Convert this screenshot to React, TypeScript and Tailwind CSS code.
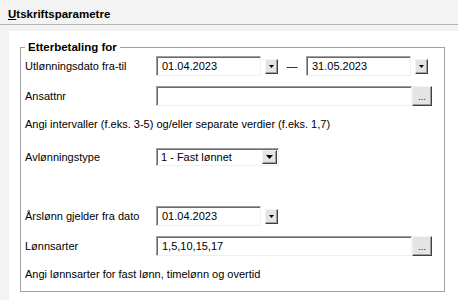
import type { ReactNode } from 'react';

// Classic sunken text box, raised push buttons, drawn with plain borders.
const sunken =
  'border border-t-[#a0a0a0] border-l-[#a0a0a0] border-b-[#f0f0f0] border-r-[#f0f0f0] shadow-[inset_1px_1px_0_#696969] bg-white';
const raised =
  'border border-t-[#f4f4f4] border-l-[#f4f4f4] border-b-[#404040] border-r-[#404040] shadow-[inset_-1px_-1px_0_#a0a0a0] bg-[#e4e4e4]';

function Arrow({ size = 3 }: { size?: number }) {
  return (
    <svg width={size * 2 + 1} height={size + 1} viewBox={`0 0 ${size * 2 + 1} ${size + 1}`}>
      <polygon points={`0,0 ${size * 2 + 1},0 ${size + 0.5},${size + 1}`} fill="#000" />
    </svg>
  );
}

function DateField({ value }: { value: string }) {
  return (
    <div className="flex items-center">
      <div className={`${sunken} flex h-[20px] w-[105px] items-center pl-[5px]`}>{value}</div>
      <button
        type="button"
        className={`${raised} ml-[4px] flex h-[15px] w-[13px] items-center justify-center`}
      >
        <Arrow size={2} />
      </button>
    </div>
  );
}

function PickField({ value }: { value: string }) {
  return (
    <div className="flex items-center">
      <div className={`${sunken} flex h-[20px] w-[256px] items-center pl-[5px]`}>{value}</div>
      <button
        type="button"
        className={`${raised} flex h-[20px] w-[20px] items-end justify-center pb-[3px] text-[9px] leading-none`}
      >
        ...
      </button>
    </div>
  );
}

function Row({ label, mt, children }: { label: string; mt: string; children: ReactNode }) {
  return (
    <div className={`flex items-center ${mt}`}>
      <span className="w-[131px]">{label}</span>
      {children}
    </div>
  );
}

export default function App() {
  return (
    <div className="flex h-[300px] w-[458px] flex-col bg-[#f3f3f3] font-['Liberation_Sans',Arial,sans-serif] text-[11px] text-black">
      <div className="flex h-[25px] items-end border-b border-[#b4b4b4] px-[8px] pb-[4px]">
        <span className="text-[11.5px] font-bold leading-none">
          <span className="underline">U</span>tskriftsparametre
        </span>
      </div>
      <div className="ml-[9px] mt-[6px] flex-1 bg-white pl-[11px] pt-[9px]">
        <fieldset className="h-[252px] w-[425px] border border-[#a0a0a0] px-[4px]">
          <legend className="px-[3px] text-[11.5px] font-bold leading-[14px]">
            Etterbetaling for
          </legend>
          <Row label="Utlønningsdato fra-til" mt="mt-[2px]">
            <DateField value="01.04.2023" />
            <span className="w-[28px] text-center leading-none">—</span>
            <DateField value="31.05.2023" />
          </Row>
          <Row label="Ansattnr" mt="mt-[10px]">
            <PickField value="" />
          </Row>
          <p className="mt-[11px] leading-[14px]">
            Angi intervaller (f.eks. 3-5) og/eller separate verdier (f.eks. 1,7)
          </p>
          <Row label="Avlønningstype" mt="mt-[17px]">
            <div className={`${sunken} flex h-[18px] w-[123px] items-center justify-between pl-[4px] pr-[1px]`}>
              <span>1 - Fast lønnet</span>
              <span className={`${raised} flex h-[14px] w-[15px] items-center justify-center`}>
                <Arrow size={3} />
              </span>
            </div>
          </Row>
          <Row label="Årslønn gjelder fra dato" mt="mt-[40px]">
            <DateField value="01.04.2023" />
          </Row>
          <Row label="Lønnsarter" mt="mt-[10px]">
            <PickField value="1,5,10,15,17" />
          </Row>
          <p className="mt-[11px] leading-[14px]">Angi lønnsarter for fast lønn, timelønn og overtid</p>
        </fieldset>
      </div>
    </div>
  );
}
